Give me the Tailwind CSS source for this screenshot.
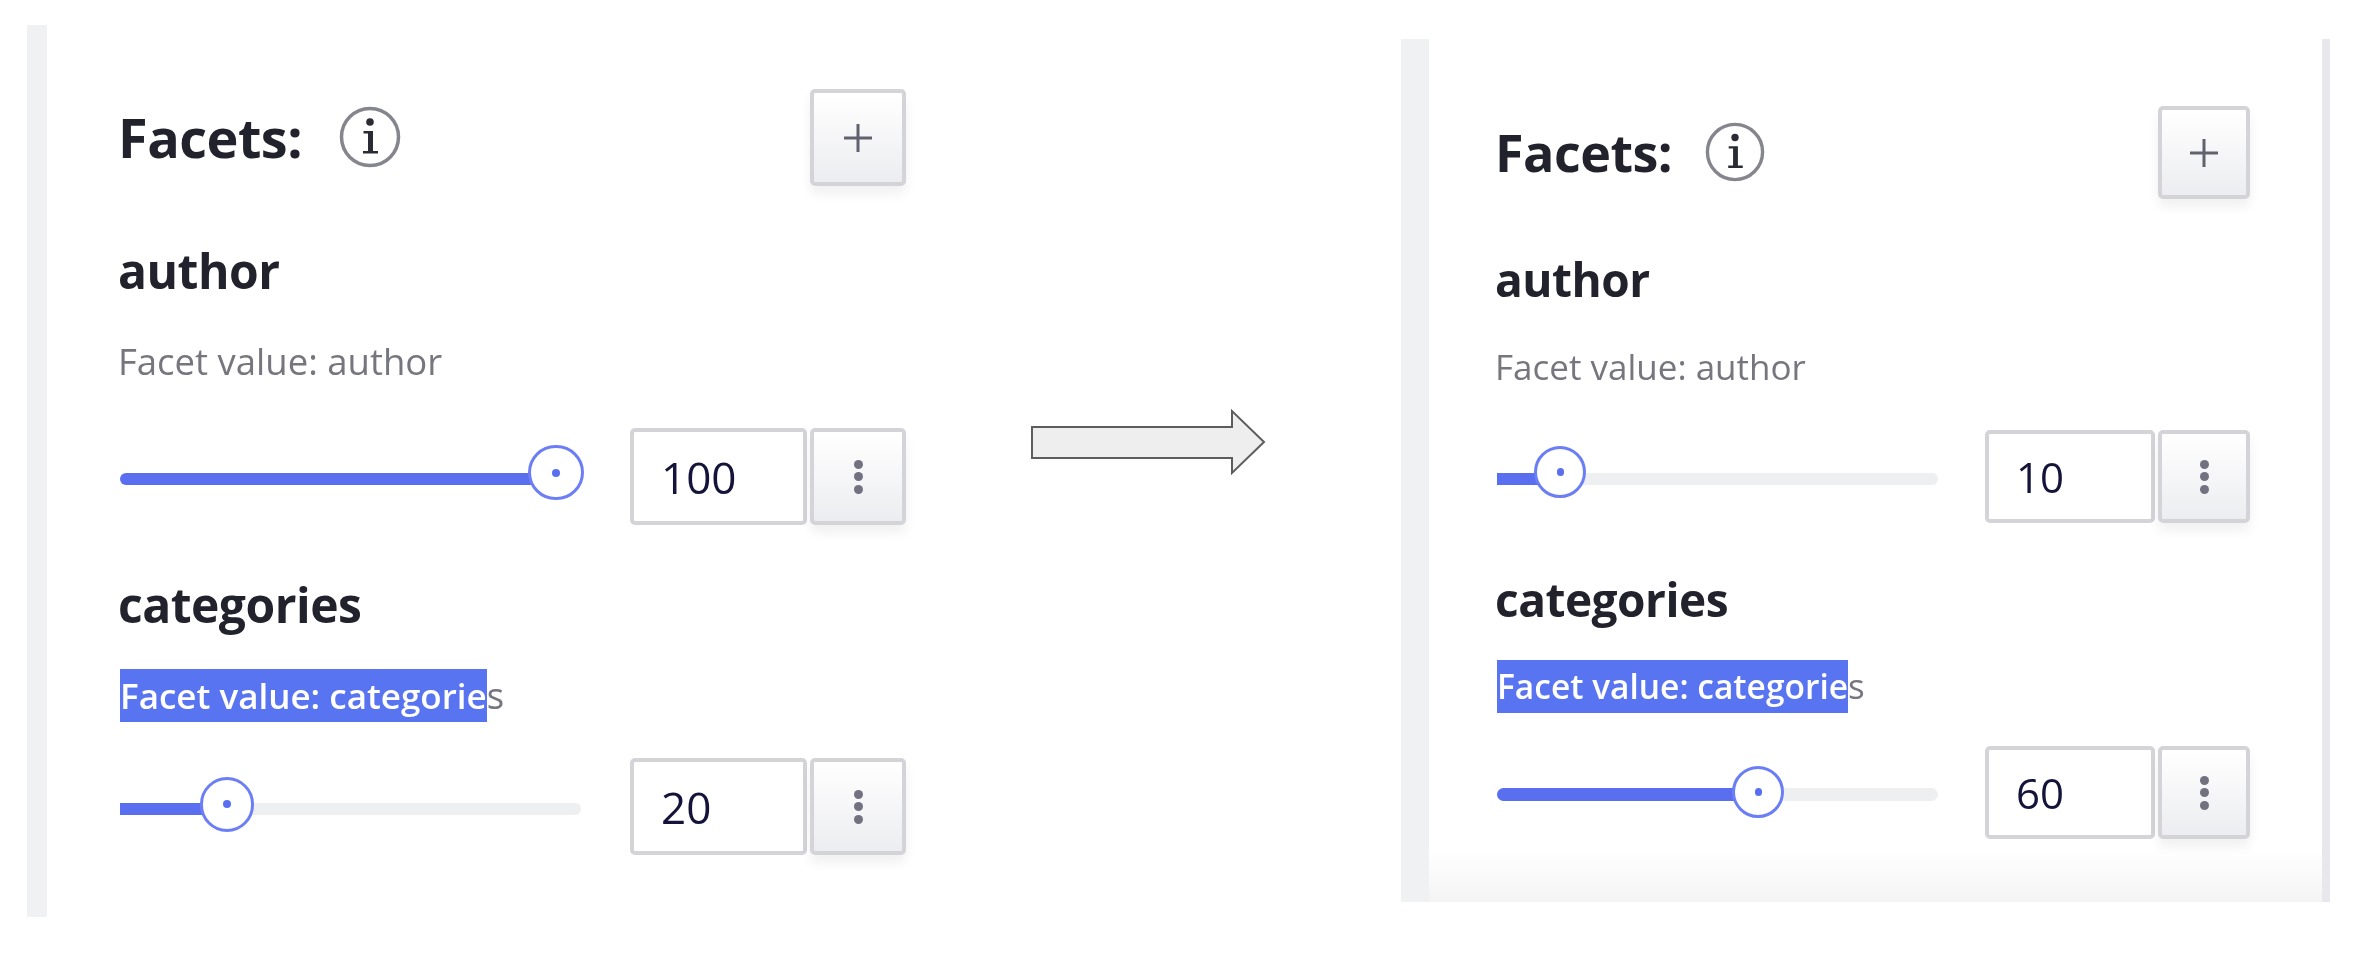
<!DOCTYPE html>
<html>
<head>
<meta charset="utf-8">
<script src="https://cdn.jsdelivr.net/npm/@tailwindcss/browser@4"></script>
</head>
<body class="bg-white">
<div class="relative flex items-start w-[2374px] h-[968px] overflow-hidden bg-white font-['Open_Sans',sans-serif] blur-[0.6px]">

  <!-- left panel -->
  <section class="ml-[27px] mt-[25px] h-[892px] w-[879px] shrink-0 border-l-[20px] border-[#f0f1f3] flex flex-col pl-[73px] pt-[64px]">
    <div class="flex items-center justify-between h-[97px]">
      <div class="flex items-center">
        <h2 class="ml-[-2px] text-[54px] tracking-[-0.5px] leading-[60px] font-bold text-[#22222c] mt-[-2px]">Facets:</h2>
        <svg class="ml-[37px] mt-[-1px]" width="62" height="62" viewBox="0 0 62 62" fill="none">
          <circle cx="31" cy="31" r="28.5" stroke="#85858d" stroke-width="3.5"/>
          <circle cx="31" cy="16" r="3.800" fill="#2b2b35"/>
          <path d="M24.500 25h9.500v20h5v2.500H24v-2.500h5V27.500h-4.500z" fill="#2b2b35"/>
        </svg>
      </div>
      <button class="w-[96px] h-[97px] rounded-[5px] border-[4px] border-[#d4d4d8] bg-gradient-to-b from-white to-[#ecedf0] shadow-[0_8px_12px_rgba(0,0,0,0.06)] flex items-center justify-center">
        <svg width="30" height="30" viewBox="0 0 30 30"><path d="M15 1v28M1 15h28" stroke="#62626f" stroke-width="3"/></svg>
      </button>
    </div>

    <h3 class="ml-[-2px] mt-[55px] text-[48px] tracking-[-0.5px] leading-[60px] font-bold text-[#22222c]">author</h3>
    <p class="ml-[-2px] mt-[34px] text-[36.500px] leading-[53px] text-[#76767e]">Facet value: author</p>
    <div class="mt-[40px] flex items-center h-[97px]">
      <div class="relative w-[461px] h-[12px] mt-[5px] rounded-full bg-[#5a6ff0]">
        <div class="absolute left-[408px] top-[-28px] w-[56px] h-[55px] rounded-full border-[3px] border-[#6c7ef5] bg-white flex items-center justify-center">
          <div class="w-[8px] h-[8px] rounded-full bg-[#5a6ff0]"></div>
        </div>
      </div>
      <div class="ml-[49px] w-[177px] h-[97px] rounded-[5px] border-[4px] border-[#d4d4d8] bg-white flex items-center pl-[27px] text-[44px] text-[#14143a]">100</div>
      <button class="ml-[3px] w-[96px] h-[97px] rounded-[5px] border-[4px] border-[#d4d4d8] bg-gradient-to-b from-white to-[#ecedf0] shadow-[0_8px_12px_rgba(0,0,0,0.06)] flex flex-col items-center justify-center gap-[3.500px]">
        <span class="w-[9px] h-[9px] rounded-full bg-[#71717f]"></span><span class="w-[9px] h-[9px] rounded-full bg-[#71717f]"></span><span class="w-[9px] h-[9px] rounded-full bg-[#71717f]"></span>
      </button>
    </div>

    <h3 class="ml-[-2px] mt-[50px] text-[48px] tracking-[-0.5px] leading-[60px] font-bold text-[#22222c]">categories</h3>
    <p class="mt-[34px] text-[36.500px] leading-[53px] text-[#76767e]"><span class="inline-block bg-[#5874f0] text-white font-semibold text-[35px]">Facet value: categorie</span>s</p>
    <div class="mt-[36px] flex items-center h-[97px]">
      <div class="relative w-[461px] h-[12px] mt-[4px] rounded-full bg-[#eeeff1]">
        <div class="absolute left-0 top-0 w-[90px] h-[12px] bg-[#5a6ff0]"></div>
        <div class="absolute left-[80px] top-[-26px] w-[54px] h-[55px] rounded-full border-[3px] border-[#6c7ef5] bg-white flex items-center justify-center">
          <div class="w-[8px] h-[8px] rounded-full bg-[#5a6ff0]"></div>
        </div>
      </div>
      <div class="ml-[49px] w-[177px] h-[97px] rounded-[5px] border-[4px] border-[#d4d4d8] bg-white flex items-center pl-[27px] text-[44px] text-[#14143a]">20</div>
      <button class="ml-[3px] w-[96px] h-[97px] rounded-[5px] border-[4px] border-[#d4d4d8] bg-gradient-to-b from-white to-[#ecedf0] shadow-[0_8px_12px_rgba(0,0,0,0.06)] flex flex-col items-center justify-center gap-[3.500px]">
        <span class="w-[9px] h-[9px] rounded-full bg-[#71717f]"></span><span class="w-[9px] h-[9px] rounded-full bg-[#71717f]"></span><span class="w-[9px] h-[9px] rounded-full bg-[#71717f]"></span>
      </button>
    </div>
  </section>

  <!-- arrow -->
  <svg class="ml-[124px] mt-[408px] shrink-0" width="238" height="68" viewBox="0 0 238 68" fill="none">
    <path d="M2 19h200V3l32 31-32 31V50H2z" fill="#eeeeee" stroke="#5d5d5d" stroke-width="2"/>
  </svg>

  <!-- right panel -->
  <section class="ml-[133px] mt-[39px] h-[863px] w-[929px] shrink-0 border-l-[28px] border-r-[8px] border-l-[#f0f1f3] border-r-[#e8e8ec] flex flex-col pl-[68px] pr-[72px] pt-[67px] bg-gradient-to-b from-white from-[94%] to-[#f4f4f5]">
    <div class="flex items-center justify-between h-[93px]">
      <div class="flex items-center">
        <h2 class="ml-[-2px] text-[52px] tracking-[-0.5px] leading-[60px] font-bold text-[#22222c] mt-[-2px]">Facets:</h2>
        <svg class="ml-[33px] mt-[-1px]" width="60" height="60" viewBox="0 0 62 62" fill="none">
          <circle cx="31" cy="31" r="28.5" stroke="#85858d" stroke-width="3.5"/>
          <circle cx="31" cy="16" r="3.800" fill="#2b2b35"/>
          <path d="M24.500 25h9.500v20h5v2.500H24v-2.500h5V27.500h-4.500z" fill="#2b2b35"/>
        </svg>
      </div>
      <button class="w-[92px] h-[93px] rounded-[5px] border-[4px] border-[#d4d4d8] bg-gradient-to-b from-white to-[#ecedf0] shadow-[0_8px_12px_rgba(0,0,0,0.06)] flex items-center justify-center">
        <svg width="30" height="28" viewBox="0 0 30 28"><path d="M15 0v28M1 14h28" stroke="#62626f" stroke-width="3"/></svg>
      </button>
    </div>

    <h3 class="ml-[-2px] mt-[50px] text-[46px] tracking-[-0.5px] leading-[60px] font-bold text-[#22222c]">author</h3>
    <p class="ml-[-2px] mt-[31px] text-[35px] leading-[53px] text-[#76767e]">Facet value: author</p>
    <div class="mt-[37px] flex items-center h-[93px]">
      <div class="relative w-[441px] h-[12px] mt-[4px] rounded-full bg-[#eeeff1]">
        <div class="absolute left-0 top-0 w-[50px] h-[12px] bg-[#5a6ff0]"></div>
        <div class="absolute left-[37px] top-[-27px] w-[52px] h-[52px] rounded-full border-[3px] border-[#6c7ef5] bg-white flex items-center justify-center">
          <div class="w-[7px] h-[8px] rounded-full bg-[#5a6ff0]"></div>
        </div>
      </div>
      <div class="ml-[47px] w-[170px] h-[93px] rounded-[5px] border-[4px] border-[#d4d4d8] bg-white flex items-center pl-[27px] text-[42px] text-[#14143a]">10</div>
      <button class="ml-[3px] w-[92px] h-[93px] rounded-[5px] border-[4px] border-[#d4d4d8] bg-gradient-to-b from-white to-[#ecedf0] shadow-[0_8px_12px_rgba(0,0,0,0.06)] flex flex-col items-center justify-center gap-[3.500px]">
        <span class="w-[9px] h-[9px] rounded-full bg-[#71717f]"></span><span class="w-[9px] h-[9px] rounded-full bg-[#71717f]"></span><span class="w-[9px] h-[9px] rounded-full bg-[#71717f]"></span>
      </button>
    </div>

    <h3 class="ml-[-2px] mt-[46px] text-[46px] tracking-[-0.5px] leading-[60px] font-bold text-[#22222c]">categories</h3>
    <p class="mt-[30px] text-[35px] leading-[53px] text-[#76767e]"><span class="inline-block bg-[#5874f0] text-white font-semibold text-[33.500px]">Facet value: categorie</span>s</p>
    <div class="mt-[33px] flex items-center h-[93px]">
      <div class="relative w-[441px] h-[13px] mt-[4px] rounded-full bg-[#eeeff1]">
        <div class="absolute left-0 top-0 w-[250px] h-[13px] rounded-l-full bg-[#5a6ff0]"></div>
        <div class="absolute left-[235px] top-[-22px] w-[52px] h-[52px] rounded-full border-[3px] border-[#6c7ef5] bg-white flex items-center justify-center">
          <div class="w-[7px] h-[8px] rounded-full bg-[#5a6ff0]"></div>
        </div>
      </div>
      <div class="ml-[47px] w-[170px] h-[93px] rounded-[5px] border-[4px] border-[#d4d4d8] bg-white flex items-center pl-[27px] text-[42px] text-[#14143a]">60</div>
      <button class="ml-[3px] w-[92px] h-[93px] rounded-[5px] border-[4px] border-[#d4d4d8] bg-gradient-to-b from-white to-[#ecedf0] shadow-[0_8px_12px_rgba(0,0,0,0.06)] flex flex-col items-center justify-center gap-[3.500px]">
        <span class="w-[9px] h-[9px] rounded-full bg-[#71717f]"></span><span class="w-[9px] h-[9px] rounded-full bg-[#71717f]"></span><span class="w-[9px] h-[9px] rounded-full bg-[#71717f]"></span>
      </button>
    </div>
  </section>
</div>
</body>
</html>
